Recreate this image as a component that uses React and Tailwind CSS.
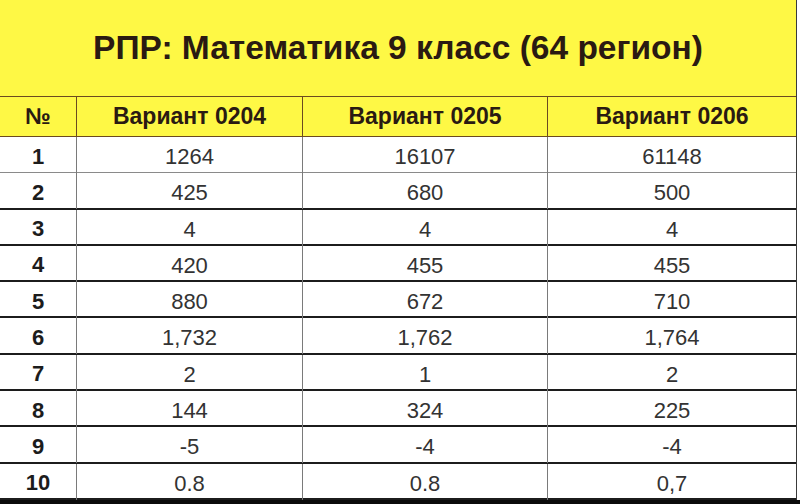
import React from 'react';

const rows = [
    ['1', '1264', '16107', '61148'],
    ['2', '425', '680', '500'],
    ['3', '4', '4', '4'],
    ['4', '420', '455', '455'],
    ['5', '880', '672', '710'],
    ['6', '1,732', '1,762', '1,764'],
    ['7', '2', '1', '2'],
    ['8', '144', '324', '225'],
    ['9', '-5', '-4', '-4'],
    ['10', '0.8', '0.8', '0,7'],
];

const App = () => {
    return (
        <div className="w-[800px] h-[504px] bg-white overflow-hidden font-['Liberation_Sans',Arial,sans-serif]">
            <div className="w-[797px] border-r border-[#3a3a3a]">
                <div className="h-[97px] bg-[#fef845] border-b border-[#6b4a1f] flex items-center justify-center">
                    <h1 className="text-[33.5px] font-bold text-[#2a1a12] tracking-[0px]">
                        РПР: Математика 9 класс (64 регион)
                    </h1>
                </div>
                <div className="grid grid-cols-[77px_226px_245px_1fr] h-[40px] bg-[#fef845] border-b border-[#6b4a1f] text-[23px] font-bold text-[#2a1a12]">
                    <div className="flex items-center justify-center border-r border-[#6b4a1f]">№</div>
                    <div className="flex items-center justify-center border-r border-[#6b4a1f]">Вариант 0204</div>
                    <div className="flex items-center justify-center border-r border-[#6b4a1f]">Вариант 0205</div>
                    <div className="flex items-center justify-center">Вариант 0206</div>
                </div>
                {rows.map((r, i) => (
                    <div
                        key={r[0]}
                        className={
                            'grid grid-cols-[77px_226px_245px_1fr] h-[36.3px] ' +
                            (i === 0 ? 'border-b border-[#8a8a8a]' : 'border-b-2 border-[#1c1c1c]')
                        }
                    >
                        <div className="flex items-center justify-center border-r border-[#7a7a7a] text-[22px] font-bold text-[#1c1c1c] pt-[2px]">
                            {r[0]}
                        </div>
                        <div className="flex items-center justify-center border-r border-[#7a7a7a] text-[22px] text-[#333] pt-[3px]">
                            {r[1]}
                        </div>
                        <div className="flex items-center justify-center border-r border-[#7a7a7a] text-[22px] text-[#333] pt-[3px]">
                            {r[2]}
                        </div>
                        <div className="flex items-center justify-center text-[22px] text-[#333] pt-[3px]">
                            {r[3]}
                        </div>
                    </div>
                ))}
            </div>
            <div className="h-[6px] bg-[#0a0a0a]" />
        </div>
    );
};

export default App;
